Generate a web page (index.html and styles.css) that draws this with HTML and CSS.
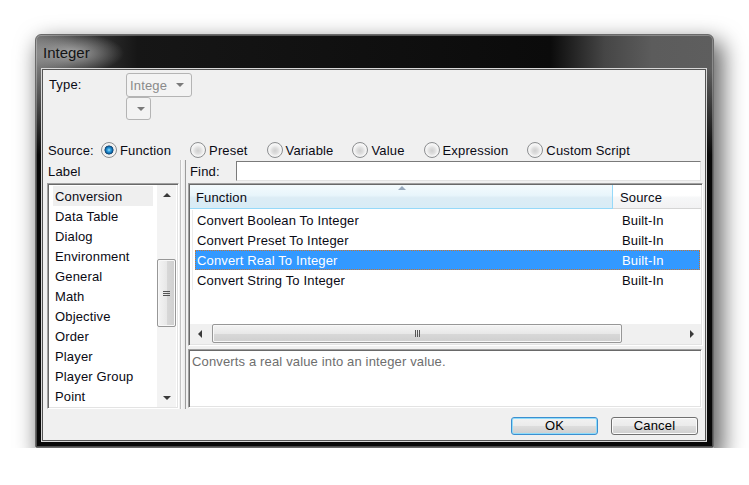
FILE: index.html
```html
<!DOCTYPE html>
<html>
<head>
<meta charset="utf-8">
<title>Integer</title>
<link rel="stylesheet" href="styles.css">
</head>
<body>
<div class="window">
  <div class="titlebar"><span class="title">Integer</span></div>
  <div class="client">
    <div class="type-row">
      <span class="type-label">Type:</span>
      <div class="type-controls">
        <div class="combo"><span class="combo-text">Intege</span><span class="combo-arrow"></span></div>
        <div class="combo combo-small"><span class="combo-arrow"></span></div>
      </div>
    </div>
    <div class="source-row">
      <span class="source-label">Source:</span>
      <label class="radio"><span class="radio-dot checked"></span><span class="radio-text">Function</span></label>
      <label class="radio"><span class="radio-dot"></span><span class="radio-text">Preset</span></label>
      <label class="radio"><span class="radio-dot"></span><span class="radio-text">Variable</span></label>
      <label class="radio"><span class="radio-dot"></span><span class="radio-text">Value</span></label>
      <label class="radio"><span class="radio-dot"></span><span class="radio-text">Expression</span></label>
      <label class="radio"><span class="radio-dot"></span><span class="radio-text">Custom Script</span></label>
    </div>
    <div class="split">
      <div class="left-pane">
        <div class="pane-label">Label</div>
        <div class="listbox sunken">
          <ul class="list-items">
            <li class="list-item selected">Conversion</li>
            <li class="list-item">Data Table</li>
            <li class="list-item">Dialog</li>
            <li class="list-item">Environment</li>
            <li class="list-item">General</li>
            <li class="list-item">Math</li>
            <li class="list-item">Objective</li>
            <li class="list-item">Order</li>
            <li class="list-item">Player</li>
            <li class="list-item">Player Group</li>
            <li class="list-item">Point</li>
          </ul>
          <div class="vscroll">
            <div class="vbtn"><span class="tri-up"></span></div>
            <div class="vthumb"><span class="vgrip"></span></div>
            <div class="vtrack"></div>
            <div class="vbtn"><span class="tri-down"></span></div>
          </div>
        </div>
      </div>
      <div class="splitter"><span class="splitter-bar"></span></div>
      <div class="right-pane">
        <div class="find-row">
          <span class="find-label">Find:</span>
          <div class="find-input"></div>
        </div>
        <div class="table sunken">
          <div class="thead">
            <div class="th th-sorted">Function<span class="sort-arrow"></span></div>
            <div class="th th-source">Source</div>
          </div>
          <div class="tbody">
            <div class="rows">
              <div class="row"><span class="cell-fn">Convert Boolean To Integer</span><span class="cell-src">Built-In</span></div>
              <div class="row"><span class="cell-fn">Convert Preset To Integer</span><span class="cell-src">Built-In</span></div>
              <div class="row selected"><span class="cell-fn">Convert Real To Integer</span><span class="cell-src">Built-In</span></div>
              <div class="row"><span class="cell-fn">Convert String To Integer</span><span class="cell-src">Built-In</span></div>
            </div>
          </div>
          <div class="hscroll">
            <div class="hbtn"><span class="tri-left"></span></div>
            <div class="hthumb"><span class="hgrip"></span></div>
            <div class="htrack"></div>
            <div class="hbtn"><span class="tri-right"></span></div>
          </div>
        </div>
        <div class="desc sunken">Converts a real value into an integer value.</div>
      </div>
    </div>
    <div class="button-row">
      <button class="btn btn-default">OK</button>
      <button class="btn">Cancel</button>
    </div>
  </div>
</div>
</body>
</html>
```
FILE: styles.css
```css
* { box-sizing: border-box; }

body {
  margin: 0;
  padding: 34px 0 0 35px;
  background: #ffffff;
  font-family: "Liberation Sans", Arial, sans-serif;
  font-size: 13px;
  letter-spacing: 0.15px;
  color: #0a0a14;
}

.window {
  width: 679px;
  height: 414px;
  border: 1px solid #6a6a6a;
  border-radius: 6px 6px 2px 2px;
  background:
    linear-gradient(to bottom, rgba(8,8,8,0) 0, rgba(8,8,8,0) 34px, #080808 120px),
    linear-gradient(to right, #7a7a7a 0, #3e3e3e 6%, #161616 15%, #0b0b0b 76%, #464646 84%, #5c5c5c 91%, #5e5e5e 100%);
  box-shadow: 6px 10px 22px 3px rgba(0,0,0,0.6), inset 0 0 0 1px rgba(255,255,255,0.28);
  display: flex;
  flex-direction: column;
}

.titlebar {
  height: 34px;
  flex: none;
  display: flex;
  align-items: center;
  padding-left: 7px;
  background: radial-gradient(ellipse 52px 20px at 36px 18px, rgba(200,200,200,0.75), rgba(200,200,200,0));
}

.title {
  font-size: 15px;
  letter-spacing: 0;
  color: #141414;
}

.client {
  flex: 1;
  margin: 0 7px 6px 6px;
  border: 1px solid #555;
  box-shadow: 0 0 0 1px #d8d8d8;
  background: #f0f0f0;
  display: flex;
  flex-direction: column;
  padding: 0 1px 0 4px;
}

/* Type row */
.type-row {
  display: flex;
  height: 50px;
  padding-top: 3px;
}
.type-label {
  width: 79px;
  padding-left: 2px;
  line-height: 24px;
}
.type-controls {
  display: flex;
  flex-direction: column;
}
.combo {
  width: 66px;
  height: 24px;
  border: 1px solid #b4b4b4;
  border-radius: 3px;
  background: #f3f3f3;
  display: flex;
  align-items: center;
  padding-left: 3px;
  color: #8a8a8a;
}
.combo-arrow {
  margin-left: auto;
  margin-right: 7px;
  width: 0;
  height: 0;
  border-left: 4px solid transparent;
  border-right: 4px solid transparent;
  border-top: 4px solid #7a7a7a;
}
.combo-small {
  width: 25px;
  height: 23px;
}
.combo-small .combo-arrow { margin-right: 5px; }

/* Source row */
.source-row {
  margin-top: 21px;
  height: 18px;
  display: flex;
  align-items: center;
  gap: 19px;
}
.source-label {
  width: 54px;
  padding-left: 1px;
  margin-right: -19px;
}
.radio {
  display: flex;
  align-items: center;
  gap: 3px;
}
.radio-dot {
  width: 16px;
  height: 16px;
  border-radius: 50%;
  border: 1px solid #8c8e90;
  background: radial-gradient(circle at 50% 55%, #cfcfcf 0, #dedede 3px, #efefef 5px, #f8f8f8 7px);
  box-shadow: inset 0 0 0 1px #f4f4f4;
}
.radio-dot.checked {
  background: radial-gradient(circle at 50% 50%, #9fe0ff 0, #3aa7e2 1.5px, #1474b8 3px, #0b3f6d 4.2px, #eaeaea 4.8px, #f4f4f4 7px);
}

/* Split */
.split {
  margin-top: 1px;
  height: 250px;
  display: flex;
}
.left-pane {
  width: 132px;
  display: flex;
  flex-direction: column;
}
.pane-label {
  height: 23px;
  line-height: 23px;
  padding-left: 1px;
}

.sunken {
  border: 1px solid;
  border-color: #a0a0a0 #ffffff #ffffff #a0a0a0;
  box-shadow: inset 1px 1px 0 #696969, inset -1px -1px 0 #e3e3e3;
  padding: 1px;
  background: #fff;
}

.listbox {
  height: 226px;
  display: flex;
}
.list-items {
  flex: 1;
  list-style: none;
  margin: 0;
  padding: 1px 0 0 4px;
}
.list-item {
  width: 100px;
  height: 20px;
  line-height: 22px;
  padding-left: 2px;
  white-space: nowrap;
}
.list-item.selected { background: #efefef; }

.vscroll {
  width: 19px;
  margin-right: 1px;
  background: #f3f3f3;
  display: flex;
  flex-direction: column;
}
.vbtn {
  height: 19px;
  display: flex;
  align-items: center;
  justify-content: center;
}
.tri-up {
  border-left: 4px solid transparent;
  border-right: 4px solid transparent;
  border-bottom: 4px solid #3a3a3a;
}
.tri-down {
  border-left: 4px solid transparent;
  border-right: 4px solid transparent;
  border-top: 4px solid #3a3a3a;
}
.vthumb {
  margin-top: 55px;
  height: 68px;
  border: 1px solid #979797;
  border-radius: 2px;
  background: linear-gradient(to right, #f4f4f4 0, #e8e8e8 50%, #d8d8d8 51%, #cfcfcf 100%);
  box-shadow: inset 0 0 0 1px #f8f8f8;
  display: flex;
  align-items: center;
  justify-content: center;
}
.vgrip {
  width: 7px;
  height: 5px;
  border-top: 1px solid #555;
  border-bottom: 1px solid #555;
  position: relative;
}
.vgrip::after {
  content: "";
  position: absolute;
  left: 0;
  right: 0;
  top: 1px;
  border-top: 1px solid #555;
}
.vtrack { flex: 1; }

.splitter {
  width: 9px;
  padding-left: 1px;
}
.splitter-bar {
  display: block;
  width: 6px;
  height: 249px;
  border-left: 1px solid #c4c4c4;
  border-right: 1px solid #9c9c9c;
  background: linear-gradient(to right, #fafafa 0, #e9e9e9 100%);
}

.right-pane {
  flex: 1;
  display: flex;
  flex-direction: column;
}
.find-row {
  margin-top: 1px;
  height: 20px;
  display: flex;
  align-items: center;
}
.find-label {
  width: 48px;
  padding-left: 2px;
}
.find-input {
  width: 465px;
  height: 20px;
  background: #fff;
  border: 1px solid;
  border-color: #7a7a7a #e3e3e3 #e3e3e3 #7a7a7a;
}

.table {
  margin-top: 2px;
  height: 163px;
  width: 515px;
  display: flex;
  flex-direction: column;
}
.thead {
  height: 24px;
  display: flex;
  border-bottom: 1px solid #d5d5d5;
}
.th {
  line-height: 26px;
  white-space: nowrap;
}
.th-sorted {
  width: 423px;
  padding-left: 6px;
  position: relative;
  background: linear-gradient(to bottom, #f4fafd 0, #e8f5fb 45%, #dcecf5 55%, #d8ecf6 100%);
  border-right: 1px solid #96d9f9;
  border-bottom: 1px solid #96d9f9;
  margin-bottom: -1px;
}
.th-source {
  flex: 1;
  padding-left: 7px;
  background: linear-gradient(to bottom, #ffffff 0, #ffffff 45%, #f6f7f8 55%, #f2f2f3 100%);
}
.sort-arrow {
  position: absolute;
  left: 208px;
  top: 1px;
  border-left: 4px solid transparent;
  border-right: 4px solid transparent;
  border-bottom: 4px solid #97a9bd;
}

.tbody {
  flex: 1;
  padding-top: 1px;
}
.rows {
  margin-left: 2px;
  margin-right: 1px;
  padding-left: 2px;
  border-left: 1px solid #ececec;
}
.row {
  height: 20px;
  line-height: 22px;
  display: flex;
  white-space: nowrap;
}
.cell-fn {
  flex: 0 0 425px;
  padding-left: 2px;
}
.cell-src { padding-left: 2px; }
.row.selected {
  background: #3399ff;
  color: #fff;
  outline: 1px dotted #c9752f;
  outline-offset: -1px;
}

.hscroll {
  height: 20px;
  display: flex;
  background: #f0f0f0;
}
.hbtn {
  width: 19px;
  display: flex;
  align-items: center;
  justify-content: center;
}
.tri-left {
  border-top: 4px solid transparent;
  border-bottom: 4px solid transparent;
  border-right: 4px solid #3a3a3a;
}
.tri-right {
  border-top: 4px solid transparent;
  border-bottom: 4px solid transparent;
  border-left: 4px solid #3a3a3a;
}
.hthumb {
  margin-left: 3px;
  width: 410px;
  height: 19px;
  border: 1px solid #979797;
  border-radius: 2px;
  background: linear-gradient(to bottom, #f4f4f4 0, #e8e8e8 50%, #d8d8d8 51%, #cfcfcf 100%);
  box-shadow: inset 0 0 0 1px #f8f8f8;
  display: flex;
  align-items: center;
  justify-content: center;
}
.hgrip {
  width: 5px;
  height: 7px;
  border-left: 1px solid #555;
  border-right: 1px solid #555;
  position: relative;
}
.hgrip::after {
  content: "";
  position: absolute;
  top: 0;
  bottom: 0;
  left: 1px;
  border-left: 1px solid #555;
}
.htrack { flex: 1; }

.desc {
  margin-top: 3px;
  height: 59px;
  width: 514px;
  padding: 4px 3px 2px;
  line-height: 16px;
  color: #6e6e6e;
}

.button-row {
  margin-top: 7px;
  display: flex;
  justify-content: flex-end;
  gap: 13px;
  padding-right: 6px;
}
.btn {
  width: 87px;
  height: 18px;
  padding: 0;
  font-family: inherit;
  font-size: 13px;
  letter-spacing: 0.15px;
  line-height: 16px;
  color: #000;
  border: 1px solid #707070;
  border-radius: 3px;
  background: linear-gradient(to bottom, #f2f2f2 0, #ebebeb 48%, #dddddd 52%, #cfcfcf 100%);
  box-shadow: inset 0 0 0 1px #fbfbfb;
}
.btn-default {
  border-color: #3c8fd0;
  box-shadow: inset 0 0 0 1px #8fdcfa;
}
```
